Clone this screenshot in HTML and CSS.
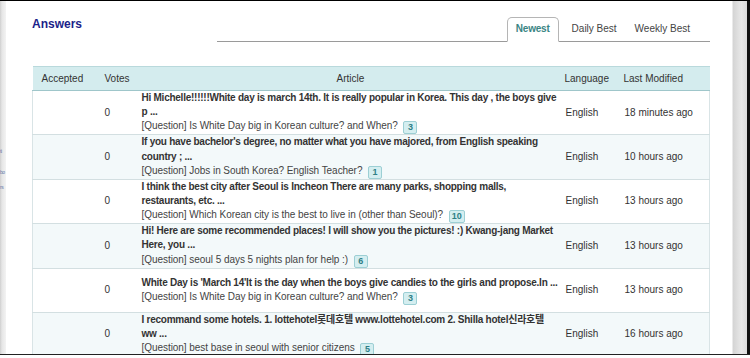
FILE: index.html
```html
<!DOCTYPE html>
<html>
<head>
<meta charset="utf-8">
<link rel="stylesheet" href="styles.css">
</head>
<body>
<div class="frame">
  <div class="left-strip">
    <span class="frag f1">ti</span>
    <span class="frag f2">bo</span>
    <span class="frag f3">rs</span>
  </div>
  <div class="main">
    <div class="head">
      <h2 class="title">Answers</h2>
      <div class="tabs">
        <span class="tab active">Newest</span>
        <span class="tab">Daily Best</span>
        <span class="tab">Weekly Best</span>
      </div>
    </div>
    <table class="list">
      <colgroup>
        <col class="c-acc"><col class="c-votes"><col class="c-art"><col class="c-lang"><col class="c-mod">
      </colgroup>
      <thead>
        <tr><th class="th-acc">Accepted</th><th class="th-votes">Votes</th><th class="th-art">Article</th><th class="th-lang">Language</th><th class="th-mod">Last Modified</th></tr>
      </thead>
      <tbody>
        <tr>
          <td></td><td class="votes">0</td>
          <td class="art"><div class="ans">Hi Michelle!!!!!!White day is march 14th. It is really popular in Korea. This day , the boys give p&nbsp;...</div><div class="q">[Question] Is White Day big in Korean culture? and When? <span class="badge">3</span></div></td>
          <td class="lang">English</td><td class="mod">18 minutes ago</td>
        </tr>
        <tr class="alt">
          <td></td><td class="votes">0</td>
          <td class="art"><div class="ans">If you have bachelor's degree, no matter what you have majored, from English speaking country ; ...</div><div class="q">[Question] Jobs in South Korea? English Teacher? <span class="badge">1</span></div></td>
          <td class="lang">English</td><td class="mod">10 hours ago</td>
        </tr>
        <tr>
          <td></td><td class="votes">0</td>
          <td class="art"><div class="ans">I think the best city after Seoul is Incheon There are many parks, shopping malls, restaurants, etc. ...</div><div class="q">[Question] Which Korean city is the best to live in (other than Seoul)? <span class="badge">10</span></div></td>
          <td class="lang">English</td><td class="mod">13 hours ago</td>
        </tr>
        <tr class="alt">
          <td></td><td class="votes">0</td>
          <td class="art"><div class="ans">Hi! Here are some recommended places! I will show you the pictures! :) Kwang-jang Market Here, you ...</div><div class="q">[Question] seoul 5 days 5 nights plan for help :) <span class="badge">6</span></div></td>
          <td class="lang">English</td><td class="mod">13 hours ago</td>
        </tr>
        <tr>
          <td></td><td class="votes">0</td>
          <td class="art"><div class="ans">White Day is 'March 14'It is the day when the boys give candies to the girls and propose.In ...</div><div class="q">[Question] Is White Day big in Korean culture? and When? <span class="badge">3</span></div></td>
          <td class="lang">English</td><td class="mod">13 hours ago</td>
        </tr>
        <tr class="alt">
          <td></td><td class="votes">0</td>
          <td class="art"><div class="ans">I recommand some hotels. 1. lottehotel롯데호텔 www.lottehotel.com 2. Shilla hotel신라호텔 ww ...</div><div class="q">[Question] best base in seoul with senior citizens <span class="badge">5</span></div></td>
          <td class="lang">English</td><td class="mod">16 hours ago</td>
        </tr>
      </tbody>
    </table>
  </div>
  <div class="right-strip"></div>
</div>
</body>
</html>
```
FILE: styles.css
```css
html, body {
  margin: 0;
  padding: 0;
  background: #ffffff;
}
body {
  width: 750px;
  height: 358px;
  overflow: hidden;
  font-family: "Liberation Sans", Arial, "Noto Sans CJK KR", sans-serif;
  font-size: 10px;
  color: #333;
}
.frame {
  display: flex;
  width: 750px;
  height: 355px;
  border-top: 1px solid #000;
  border-bottom: 1px solid #222;
  box-sizing: border-box;
  overflow: hidden;
}
.left-strip {
  width: 6px;
  flex: none;
  background: linear-gradient(to right, #cfcfcf 0, #e6e6e6 2px, #f3f3f3 6px);
  position: relative;
  overflow: hidden;
}
.frag {
  position: absolute;
  left: 0;
  font-size: 5px;
  letter-spacing: -0.5px;
  color: #6a7aa8;
}
.f1 { top: 147px; }
.f2 { top: 168px; }
.f3 { top: 183px; }
.main {
  flex: 1;
  background: #fff;
  padding: 0 0 0 26px;
  min-width: 0;
}
.right-strip {
  width: 14px;
  flex: none;
  background: linear-gradient(to right, #d4d4d4, #e8e8e8 60%, #dcdcdc);
  border-left: 1px solid #eaeaea;
  border-right: 3px solid #111;
}
.head {
  display: flex;
  align-items: flex-start;
  justify-content: space-between;
  height: 65px;
}
.title {
  margin: 16px 0 0 0;
  font-size: 12px;
  font-weight: bold;
  color: #1b1f8a;
}
.tabs {
  margin-top: 17px;
  margin-right: 22px;
  width: 493px;
  display: flex;
  justify-content: flex-end;
  align-items: flex-end;
  border-bottom: 1px solid #9a9a9a;
  height: 24px;
  padding-right: 11px;
  box-sizing: border-box;
}
.tab {
  padding: 0 9px;
  height: 23px;
  line-height: 22px;
  color: #444;
}
.tab.active {
  border: 1px solid #b5b5b5;
  border-bottom: 1px solid #fff;
  margin-bottom: -1px;
  border-radius: 5px 5px 0 0;
  color: #3a8584;
  font-weight: bold;
  letter-spacing: -0.2px;
  padding: 0 8px 0 8px;
  margin-right: 4px;
}
.list {
  width: 677px;
  border-collapse: collapse;
  table-layout: fixed;
}
.c-acc { width: 63px; }
.c-votes { width: 45px; }
.c-art { width: 420px; }
.c-lang { width: 58px; }
.c-mod { width: 91px; }
.list th {
  background: #d4ecee;
  border-top: 1px solid #b9d9dc;
  border-bottom: 1px solid #9fc6ca;
  height: 23px;
  font-weight: normal;
  color: #333;
  padding: 0;
}
.th-acc { text-align: left; padding-left: 9px !important; }
.th-votes { text-align: left; padding-left: 9px !important; }
.th-art { text-align: center; }
.th-lang { text-align: left; padding-left: 4px !important; }
.th-mod { text-align: left; padding-left: 5px !important; }
.list td {
  height: 43px;
  border-bottom: 1px solid #d3dfe1;
  vertical-align: middle;
  padding: 0;
  line-height: 14.2px;
}
.list tr.alt td { background: #f3f9fa; }
.list td:first-child { border-left: 1px solid #d9e4e6; }
.list td:last-child { border-right: 1px solid #d9e4e6; }
.votes { padding-left: 9px !important; }
.art { padding-left: 1px !important; padding-right: 0 !important; }
.ans { font-weight: bold; color: #333; letter-spacing: -0.25px; }
.q { color: #444; letter-spacing: -0.05px; }
.lang { padding-left: 5px !important; }
.mod { padding-left: 6px !important; }
.badge {
  display: inline-block;
  min-width: 8px;
  padding: 0 2px;
  height: 11px;
  line-height: 11px;
  font-size: 9px;
  font-weight: bold;
  letter-spacing: 0;
  color: #2e7f86;
  background: #d4eef0;
  border: 1px solid #9ccfd4;
  border-radius: 2px;
  text-align: center;
  margin-left: 3px;
  vertical-align: -1px;
}
```
